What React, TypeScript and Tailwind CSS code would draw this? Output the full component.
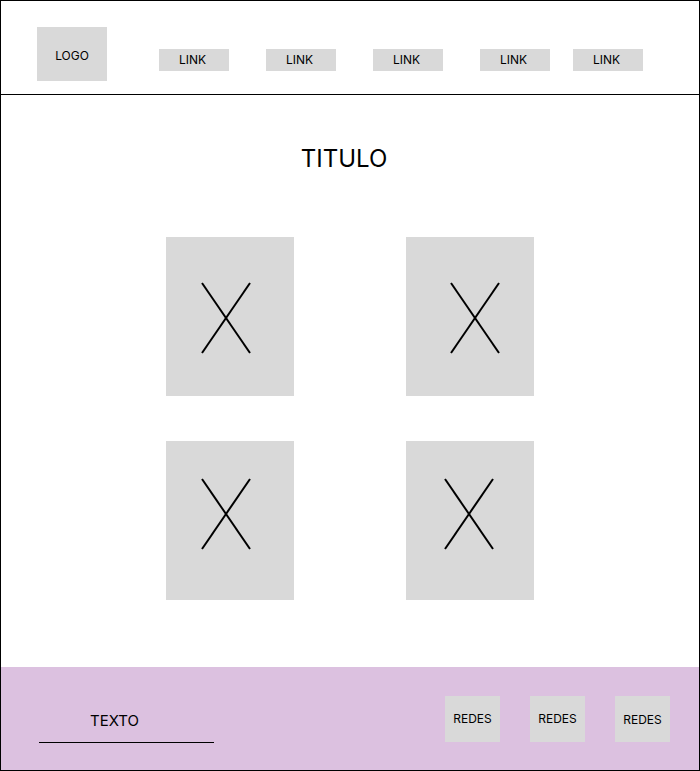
const links = [
  { label: 'LINK', ml: 'ml-[52px]' },
  { label: 'LINK', ml: 'ml-[37px]' },
  { label: 'LINK', ml: 'ml-[37px]' },
  { label: 'LINK', ml: 'ml-[37px]' },
  { label: 'LINK', ml: 'ml-[23px]' },
];

// each placeholder draws its X a little off-centre, as in the mockup
const cards = [
  { x: 36, y: 46 },
  { x: 45, y: 46 },
  { x: 36, y: 38 },
  { x: 39, y: 38 },
];

const Placeholder = ({ x, y }: { x: number; y: number }) => {
  return (
    <div className="h-[159px] w-[128px] bg-[#d9d9d9]">
      <svg width="128" height="159" viewBox="0 0 128 159">
        <line x1={x} y1={y} x2={x + 48} y2={y + 70} stroke="#000" strokeWidth="2" />
        <line x1={x + 48} y1={y} x2={x} y2={y + 70} stroke="#000" strokeWidth="2" />
      </svg>
    </div>
  );
};

export default function App() {
  return (
    <div className="flex h-[771px] w-[700px] flex-col border border-black bg-white font-['Inter',sans-serif] text-black">
      <header className="flex h-[94px] shrink-0 items-start border-b border-black pl-[36px] pt-[26px]">
        <div className="flex h-[54px] w-[70px] items-center justify-center bg-[#d9d9d9] pt-[3px] text-[12px]">
          LOGO
        </div>
        {links.map((link, i) => (
          <a
            key={i}
            className={`${link.ml} mt-[22px] flex h-[22px] w-[70px] items-center justify-center bg-[#d9d9d9] pr-[3px] text-[12px]`}
          >
            {link.label}
          </a>
        ))}
      </header>

      <main className="flex flex-1 flex-col items-center pt-[49px]">
        <h1 className="mr-[12px] text-[24px] leading-[30px]">TITULO</h1>
        <div className="mt-[63px] grid grid-cols-2 gap-x-[112px] gap-y-[45px]">
          {cards.map((c, i) => (
            <Placeholder key={i} x={c.x} y={c.y} />
          ))}
        </div>
      </main>

      <footer className="flex h-[103px] shrink-0 items-start justify-between bg-[#dcc1e0] pl-[38px] pr-[29px]">
        <div className="mt-[44px] w-[175px]">
          <p className="pl-[51px] text-[15px] leading-[20px]">TEXTO</p>
          <div className="mt-[11px] h-px bg-black"></div>
        </div>
        <div className="mt-[29px] flex gap-[30px]">
          <div className="flex h-[46px] w-[55px] items-center justify-center bg-[#d9d9d9] text-[12px]">REDES</div>
          <div className="flex h-[46px] w-[55px] items-center justify-center bg-[#d9d9d9] text-[12px]">REDES</div>
          <div className="flex h-[46px] w-[55px] items-center justify-center bg-[#d9d9d9] pt-[2px] text-[12px]">REDES</div>
        </div>
      </footer>
    </div>
  );
}
